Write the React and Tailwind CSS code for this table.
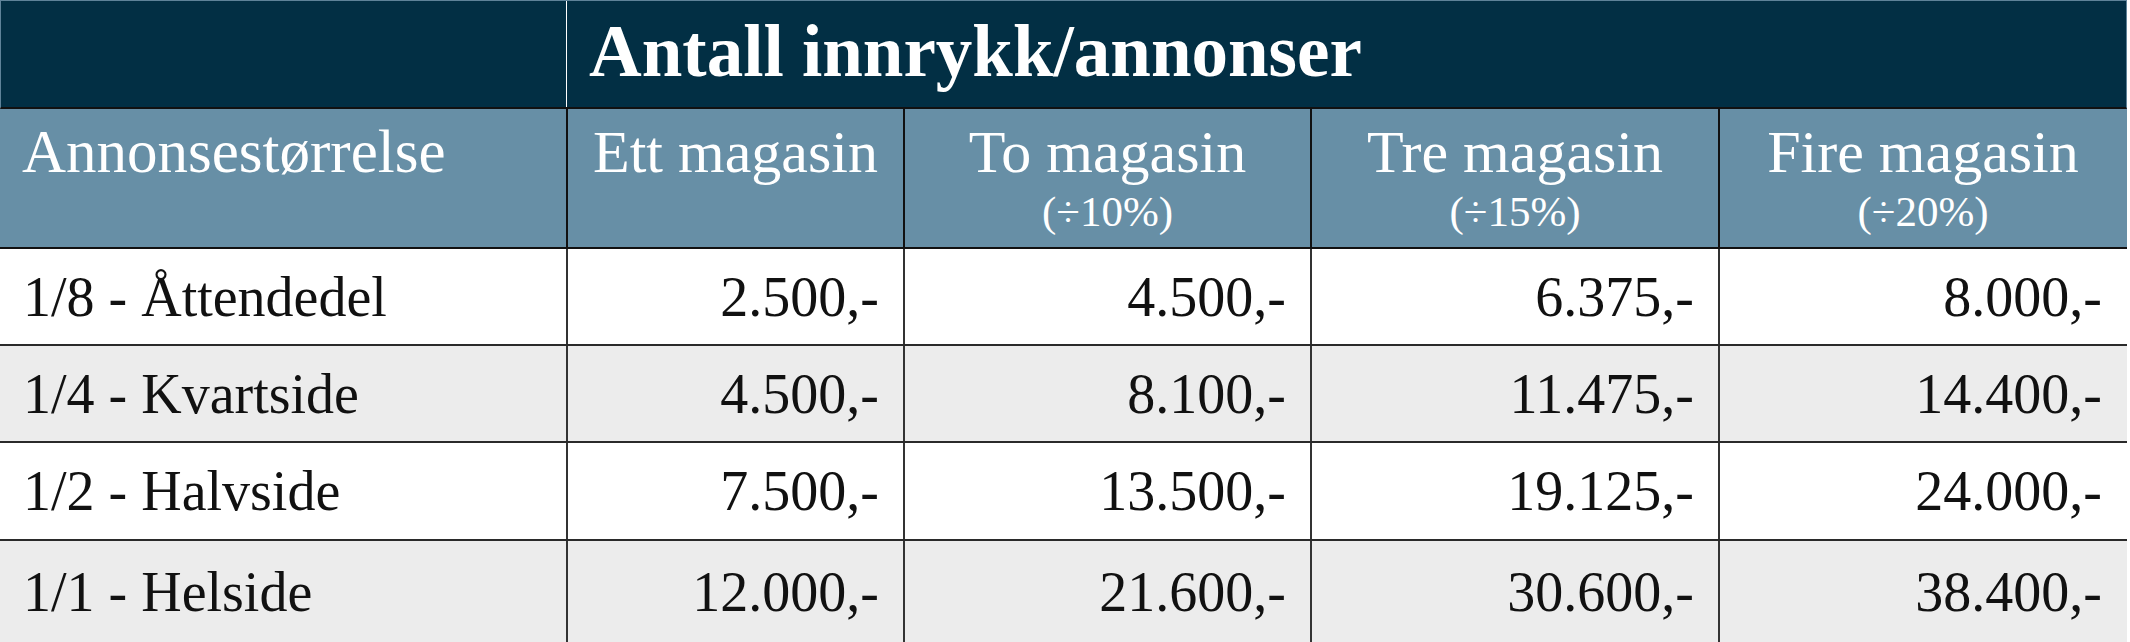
import React from "react";

const cols = ["w-[566px]", "w-[337px]", "w-[407px]", "w-[408px]", "w-[408px]"];

const heads = [
  { t: "Ett magasin", p: null },
  { t: "To magasin", p: "(÷10%)" },
  { t: "Tre magasin", p: "(÷15%)" },
  { t: "Fire magasin", p: "(÷20%)" },
];

const rows = [
  { n: "1/8 - Åttendedel", v: ["2.500,-", "4.500,-", "6.375,-", "8.000,-"], bg: "bg-white", h: "h-[97px]" },
  { n: "1/4 - Kvartside", v: ["4.500,-", "8.100,-", "11.475,-", "14.400,-"], bg: "bg-[#ececec]", h: "h-[97px]" },
  { n: "1/2 - Halvside", v: ["7.500,-", "13.500,-", "19.125,-", "24.000,-"], bg: "bg-white", h: "h-[98px]" },
  { n: "1/1 - Helside", v: ["12.000,-", "21.600,-", "30.600,-", "38.400,-"], bg: "bg-[#ececec]", h: "h-[101px]" },
];

export default function App() {
  return (
    <div className="w-[2130px] h-[642px] bg-white overflow-hidden font-['Liberation_Serif',serif]">
      <div className="w-[2127px] flex flex-col">
        {/* Dark title row */}
        <div className="flex h-[109px] bg-[#022f44] border-t border-l border-r border-[#5f8399] border-b-2 border-b-[#111]">
          <div className="w-[565px] shrink-0" />
          <div className="flex-1 border-l border-white pl-[22px] pt-[14px]">
            <div className="text-[73px] leading-none font-bold text-white">Antall innrykk/annonser</div>
          </div>
        </div>
        {/* Sub header row */}
        <div className="flex h-[140px] bg-[#678fa6] border-b-2 border-[#111] text-white">
          <div className={`${cols[0]} shrink-0 pl-[22px] pt-[13px]`}>
            <div className="text-[61px] leading-[60px]">Annonsestørrelse</div>
          </div>
          {heads.map((h, i) => (
            <div key={i} className={`${cols[i + 1]} shrink-0 border-l-2 border-[#111] pt-[13px] text-center`}>
              <div className="text-[60px] leading-[60px]">{h.t}</div>
              {h.p && <div className="text-[43px] leading-[60px]">{h.p}</div>}
            </div>
          ))}
        </div>
        {/* Data rows */}
        {rows.map((r, ri) => (
          <div
            key={ri}
            className={`flex ${r.h} ${r.bg} text-[#111] ${ri < rows.length - 1 ? "border-b-2 border-[#2a2a2a]" : ""}`}
          >
            <div className={`${cols[0]} shrink-0 pl-[23px] flex items-center`}>
              <div className="text-[56px] leading-[56px]">{r.n}</div>
            </div>
            {r.v.map((v, i) => (
              <div
                key={i}
                className={`${cols[i + 1]} shrink-0 border-l-2 border-[#333] pr-[24px] flex items-center justify-end`}
              >
                <div className="text-[56px] leading-[56px]">{v}</div>
              </div>
            ))}
          </div>
        ))}
      </div>
    </div>
  );
}
